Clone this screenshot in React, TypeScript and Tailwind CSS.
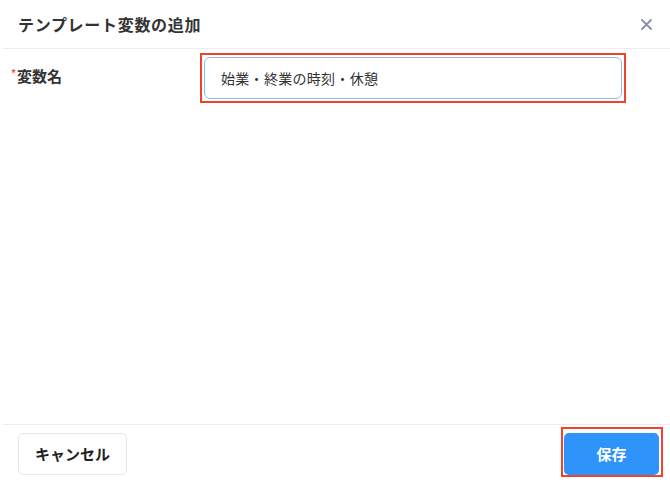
import React from 'react';

const font = { fontFamily: '"Noto Sans CJK JP", "Noto Sans", sans-serif' };

const App: React.FC = () => {
  return (
    <div className="w-[670px] h-[483px] bg-white flex flex-col text-[#333]" style={font}>
      {/* Header */}
      <div className="ml-[3px] h-[49px] flex items-center justify-between pl-[15px] pr-[18px] border-b border-[#ececec]">
        <h1 className="text-[16px] font-bold tracking-[0.7px]">テンプレート変数の追加</h1>
        <button className="text-[#8492a6]">
          <svg width="11" height="11" viewBox="0 0 11 11" fill="none" stroke="currentColor" strokeWidth="1.8" strokeLinecap="round">
            <path d="M1 1L10 10M10 1L1 10" />
          </svg>
        </button>
      </div>

      {/* Body */}
      <div className="flex-1 flex items-start pt-[4px]">
        <label className="w-[200px] pl-[11px] pt-[12px] text-[15px] font-bold flex items-start">
          <span className="text-[#f5504a] text-[10px] leading-none mt-[3px] mr-[1px]">*</span>
          変数名
        </label>
        <div className="w-[426px] border-2 border-[#f0432c] p-[2px]">
          <input
            readOnly
            value="始業・終業の時刻・休憩"
            className="w-full h-[42px] rounded-[6px] border border-[#8cbcf8] px-[16px] text-[14px] tracking-[0.3px] text-[#333] outline-none"
            style={font}
          />
        </div>
      </div>

      {/* Footer */}
      <div className="ml-[3px] h-[59px] border-t border-[#ececec] flex items-start justify-between pl-[15px] pr-[7px] pt-[2px]">
        <button className="mt-[6px] w-[109px] h-[42px] rounded-[5px] border border-[#e6e6e6] bg-white text-[15px] font-bold text-[#222]">
          キャンセル
        </button>
        <div className="w-[102px] border-2 border-[#f0432c] pt-[4px] pl-[1px]">
          <button className="w-[95px] h-[42px] rounded-[5px] bg-[#2e93fb] text-white text-[15px] font-bold">
            保存
          </button>
        </div>
      </div>
    </div>
  );
};

export default App;
